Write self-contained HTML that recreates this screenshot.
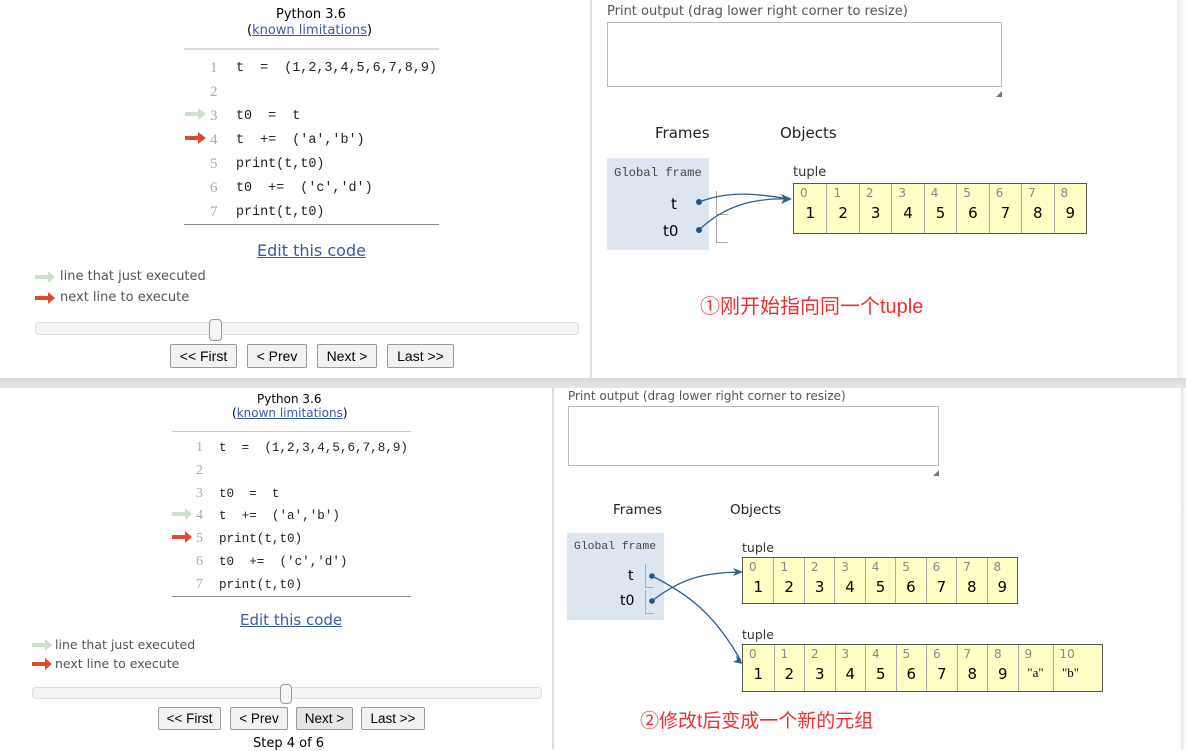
<!DOCTYPE html>
<html><head><meta charset="utf-8"><style>
*{margin:0;padding:0;box-sizing:border-box}
body{width:1186px;height:749px;position:relative;overflow:hidden;background:#fff;font-family:"Liberation Sans",Verdana,sans-serif;color:#000}
.a{position:absolute;white-space:nowrap}
.v{font-family:"DejaVu Sans","Liberation Sans",sans-serif}
.code{font-family:"Liberation Mono","Noto Serif CJK SC",monospace;color:#222}
.ln{color:#aaa;font-family:"Liberation Serif",serif}
.lnk{color:#3d58a8;text-decoration:underline}
.btn{position:absolute;border:1px solid #999;background:#f2f2f2;border-radius:2px;font-size:14px;text-align:center;color:#000}
.tup{position:absolute;display:flex;border:1px solid #555;background:#ffffc6}
.c{position:relative;border-left:1px solid #aaa;height:100%}
.c:first-child{border-left:none}
.c i{position:absolute;left:6px;top:2px;font-style:normal;font-size:12px;color:#888;font-family:"DejaVu Sans",sans-serif}
.c b{position:absolute;left:0;right:0;text-align:center;font-weight:normal;font-size:15px;font-family:"DejaVu Sans",sans-serif}
.gf{position:absolute;background:#dde5f1}
.red{color:#ee3030;font-family:"Liberation Sans","Noto Sans CJK SC",sans-serif}
</style></head><body>

<!-- TOP PANEL -->
<div class="a v" style="left:276px;top:7px;font-size:13px">Python 3.6</div>
<div class="a v" style="left:247px;top:23px;font-size:13px">(<span class="lnk">known limitations</span>)</div>
<div class="a" style="left:184px;top:48px;width:255px;height:2px;background:#ddd"></div>
<div class="a" style="left:184px;top:224px;width:255px;height:1px;background:#888"></div>
<div class="a ln" style="left:210px;top:56px;font-size:15px;line-height:24px">1<br>2<br>3<br>4<br>5<br>6<br>7</div>
<div class="a code" style="left:236px;top:57px;font-size:13.4px;line-height:24px">t&nbsp;&nbsp;=&nbsp;&nbsp;(1,2,3,4,5,6,7,8,9)<br><br>t0&nbsp;&nbsp;=&nbsp;&nbsp;t<br>t&nbsp;&nbsp;+=&nbsp;&nbsp;('a','b')<br>print(t,t0)<br>t0&nbsp;&nbsp;+=&nbsp;&nbsp;('c','d')<br>print(t,t0)</div>
<svg class="a" style="left:185px;top:107px" width="22" height="14"><path d="M0 5h13V1l8 6-8 6V9H0z" fill="#c9e2c9"/></svg>
<svg class="a" style="left:185px;top:131px" width="22" height="14"><path d="M0 5h13V1l8 6-8 6V9H0z" fill="#e04a35"/></svg>
<div class="a lnk v" style="left:257px;top:241px;font-size:16px">Edit this code</div>
<svg class="a" style="left:35px;top:271px" width="22" height="12"><path d="M0 4h13V0l7 6-7 6V8H0z" fill="#c9e2c9"/></svg>
<svg class="a" style="left:35px;top:292px" width="22" height="12"><path d="M0 4h13V0l7 6-7 6V8H0z" fill="#e04a35"/></svg>
<div class="a v" style="left:60px;top:269px;font-size:13px;color:#555">line that just executed</div>
<div class="a v" style="left:60px;top:290px;font-size:13px;color:#555">next line to execute</div>
<div class="a" style="left:35px;top:322px;width:544px;height:13px;border:1px solid #ddd;border-radius:4px;background:#f4f4f4"></div>
<div class="a" style="left:209px;top:319px;width:13px;height:22px;border:1px solid #999;border-radius:4px;background:#f6f6f6"></div>
<div class="btn" style="left:170px;top:344px;width:67px;height:24px;line-height:22px">&lt;&lt; First</div>
<div class="btn" style="left:247px;top:344px;width:60px;height:24px;line-height:22px">&lt; Prev</div>
<div class="btn" style="left:317px;top:344px;width:60px;height:24px;line-height:22px">Next &gt;</div>
<div class="btn" style="left:387px;top:344px;width:67px;height:24px;line-height:22px">Last &gt;&gt;</div>
<div class="a" style="left:590px;top:0;width:2px;height:378px;background:#ddd"></div>
<div class="a" style="left:1177px;top:0;width:9px;height:378px;background:linear-gradient(90deg,#ececec,#fff)"></div>

<div class="a v" style="left:607px;top:4px;font-size:13px;color:#555">Print output (drag lower right corner to resize)</div>
<div class="a" style="left:607px;top:22px;width:395px;height:65px;border:1px solid #bbb"></div>
<div class="a" style="left:996px;top:91px;width:0;height:0;border-left:6px solid transparent;border-bottom:6px solid #777"></div>
<div class="a v" style="left:655px;top:124px;font-size:15px;color:#222">Frames</div>
<div class="a v" style="left:780px;top:124px;font-size:15px;color:#222">Objects</div>
<div class="gf" style="left:607px;top:158px;width:102px;height:92px"></div>
<div class="a code" style="left:614px;top:166px;font-size:12.2px;color:#444">Global frame</div>
<div class="a v" style="left:671px;top:195px;font-size:15px">t</div>
<div class="a v" style="left:663px;top:222px;font-size:15px">t0</div>
<div class="a" style="left:716px;top:191px;width:12px;height:24px;border-left:1px solid #aaa;border-bottom:1px solid #aaa"></div>
<div class="a" style="left:716px;top:218px;width:12px;height:25px;border-left:1px solid #aaa;border-bottom:1px solid #aaa"></div>
<div class="a v" style="left:793px;top:165px;font-size:13px;color:#333">tuple</div>
<div class="tup" style="left:793px;top:183px;width:294px;height:51px">
<div class="c" style="width:32.6px"><i>0</i><b style="top:20px">1</b></div><div class="c" style="width:32.6px"><i>1</i><b style="top:20px">2</b></div><div class="c" style="width:32.6px"><i>2</i><b style="top:20px">3</b></div><div class="c" style="width:32.6px"><i>3</i><b style="top:20px">4</b></div><div class="c" style="width:32.6px"><i>4</i><b style="top:20px">5</b></div><div class="c" style="width:32.6px"><i>5</i><b style="top:20px">6</b></div><div class="c" style="width:32.6px"><i>6</i><b style="top:20px">7</b></div><div class="c" style="width:32.6px"><i>7</i><b style="top:20px">8</b></div><div class="c" style="width:32.6px"><i>8</i><b style="top:20px">9</b></div>
</div>
<div class="a red" style="left:700px;top:290px;font-size:20px">①刚开始指向同一个tuple</div>

<!-- band -->
<div class="a" style="left:0;top:378px;width:1186px;height:10px;background:linear-gradient(#d9d9d9,#e6e6e6)"></div>

<!-- BOTTOM PANEL -->
<div class="a v" style="left:257px;top:392px;font-size:12px">Python 3.6</div>
<div class="a v" style="left:232px;top:406px;font-size:12px">(<span class="lnk">known limitations</span>)</div>
<div class="a" style="left:172px;top:431px;width:239px;height:1px;background:#ccc"></div>
<div class="a" style="left:172px;top:596px;width:239px;height:1px;background:#888"></div>
<div class="a ln" style="left:196px;top:437px;font-size:14px;line-height:22.8px">1<br>2<br>3<br>4<br>5<br>6<br>7</div>
<div class="a code" style="left:219px;top:437px;font-size:12.6px;line-height:22.8px">t&nbsp;&nbsp;=&nbsp;&nbsp;(1,2,3,4,5,6,7,8,9)<br><br>t0&nbsp;&nbsp;=&nbsp;&nbsp;t<br>t&nbsp;&nbsp;+=&nbsp;&nbsp;('a','b')<br>print(t,t0)<br>t0&nbsp;&nbsp;+=&nbsp;&nbsp;('c','d')<br>print(t,t0)</div>
<svg class="a" style="left:172px;top:508px" width="22" height="13"><path d="M0 4h13V0l7 6-7 6V8H0z" fill="#c9e2c9"/></svg>
<svg class="a" style="left:172px;top:531px" width="22" height="13"><path d="M0 4h13V0l7 6-7 6V8H0z" fill="#e04a35"/></svg>
<div class="a lnk v" style="left:240px;top:611px;font-size:15px">Edit this code</div>
<svg class="a" style="left:32px;top:639px" width="22" height="12"><path d="M0 4h13V0l7 6-7 6V8H0z" fill="#c9e2c9"/></svg>
<svg class="a" style="left:32px;top:658px" width="22" height="12"><path d="M0 4h13V0l7 6-7 6V8H0z" fill="#e04a35"/></svg>
<div class="a v" style="left:55px;top:637px;font-size:12.5px;color:#555">line that just executed</div>
<div class="a v" style="left:55px;top:656px;font-size:12.5px;color:#555">next line to execute</div>
<div class="a" style="left:32px;top:687px;width:510px;height:12px;border:1px solid #ddd;border-radius:4px;background:#f4f4f4"></div>
<div class="a" style="left:280px;top:684px;width:12px;height:20px;border:1px solid #999;border-radius:4px;background:#f6f6f6"></div>
<div class="btn" style="left:158px;top:707px;width:63px;height:23px;line-height:21px;font-size:13.5px">&lt;&lt; First</div>
<div class="btn" style="left:230px;top:707px;width:58px;height:23px;line-height:21px;font-size:13.5px">&lt; Prev</div>
<div class="btn" style="left:296px;top:707px;width:57px;height:23px;line-height:21px;font-size:13.5px;background:#e6e6e6">Next &gt;</div>
<div class="btn" style="left:361px;top:707px;width:64px;height:23px;line-height:21px;font-size:13.5px">Last &gt;&gt;</div>
<div class="a v" style="left:253px;top:736px;font-size:13px">Step 4 of 6</div>
<div class="a" style="left:552px;top:388px;width:2px;height:361px;background:#ddd"></div>
<div class="a" style="left:1181px;top:388px;width:5px;height:361px;background:linear-gradient(90deg,#e2e2e2,#fff)"></div>

<div class="a v" style="left:568px;top:389px;font-size:12px;color:#555">Print output (drag lower right corner to resize)</div>
<div class="a" style="left:568px;top:406px;width:371px;height:60px;border:1px solid #bbb"></div>
<div class="a" style="left:933px;top:470px;width:0;height:0;border-left:6px solid transparent;border-bottom:6px solid #777"></div>
<div class="a v" style="left:613px;top:502px;font-size:13.5px;color:#222">Frames</div>
<div class="a v" style="left:730px;top:502px;font-size:13.5px;color:#222">Objects</div>
<div class="gf" style="left:567px;top:533px;width:97px;height:87px"></div>
<div class="a code" style="left:574px;top:541px;font-size:11.4px;color:#444">Global frame</div>
<div class="a v" style="left:628px;top:568px;font-size:14px">t</div>
<div class="a v" style="left:620px;top:593px;font-size:14px">t0</div>
<div class="a" style="left:645px;top:564px;width:9px;height:24px;border-left:1px solid #aaa;border-bottom:1px solid #aaa"></div>
<div class="a" style="left:645px;top:590px;width:9px;height:24px;border-left:1px solid #aaa;border-bottom:1px solid #aaa"></div>
<div class="a v" style="left:742px;top:540px;font-size:12.5px;color:#333">tuple</div>
<div class="tup" style="left:742px;top:557px;width:276px;height:47px">
<div class="c" style="width:30.5px"><i>0</i><b style="top:20px">1</b></div><div class="c" style="width:30.5px"><i>1</i><b style="top:20px">2</b></div><div class="c" style="width:30.5px"><i>2</i><b style="top:20px">3</b></div><div class="c" style="width:30.5px"><i>3</i><b style="top:20px">4</b></div><div class="c" style="width:30.5px"><i>4</i><b style="top:20px">5</b></div><div class="c" style="width:30.5px"><i>5</i><b style="top:20px">6</b></div><div class="c" style="width:30.5px"><i>6</i><b style="top:20px">7</b></div><div class="c" style="width:30.5px"><i>7</i><b style="top:20px">8</b></div><div class="c" style="width:30.5px"><i>8</i><b style="top:20px">9</b></div>
</div>
<div class="a v" style="left:742px;top:627px;font-size:12.5px;color:#333">tuple</div>
<div class="tup" style="left:742px;top:644px;width:361px;height:48px">
<div class="c" style="width:30.5px"><i>0</i><b style="top:20px">1</b></div><div class="c" style="width:30.5px"><i>1</i><b style="top:20px">2</b></div><div class="c" style="width:30.5px"><i>2</i><b style="top:20px">3</b></div><div class="c" style="width:30.5px"><i>3</i><b style="top:20px">4</b></div><div class="c" style="width:30.5px"><i>4</i><b style="top:20px">5</b></div><div class="c" style="width:30.5px"><i>5</i><b style="top:20px">6</b></div><div class="c" style="width:30.5px"><i>6</i><b style="top:20px">7</b></div><div class="c" style="width:30.5px"><i>7</i><b style="top:20px">8</b></div><div class="c" style="width:30.5px"><i>8</i><b style="top:20px">9</b></div><div class="c" style="width:35px"><i>9</i><b style="top:20px;font-size:13px;font-family:'Liberation Serif',serif">"a"</b></div><div class="c" style="width:35px"><i>10</i><b style="top:20px;font-size:13px;font-family:'Liberation Serif',serif">"b"</b></div>
</div>
<div class="a red" style="left:640px;top:706px;font-size:19px">②修改t后变成一个新的元组</div>

<svg class="a" style="left:0;top:0" width="1186" height="749">
<g fill="#1e5384"><circle cx="699" cy="202" r="3"/><circle cx="699" cy="230" r="3"/><circle cx="652" cy="576" r="2.8"/><circle cx="652" cy="601" r="2.8"/></g>
<g fill="none" stroke="#2b5f8f" stroke-width="1.3">
<path d="M699 202C730 190 760 194 788 199"/>
<path d="M699 230C725 205 755 198 788 199"/>
<path d="M652 576C690 595 715 615 741 661"/>
<path d="M652 601C685 575 710 573 740 572"/>
</g>
<g fill="#2b5f8f">
<path d="M792 199l-11-5 3 5-3 5z"/>
<path d="M743 572l-10-4 3 4-3 4z"/>
<path d="M743 664l-7-9 1 5-4 2z"/>
</g>
</svg>
</body></html>
